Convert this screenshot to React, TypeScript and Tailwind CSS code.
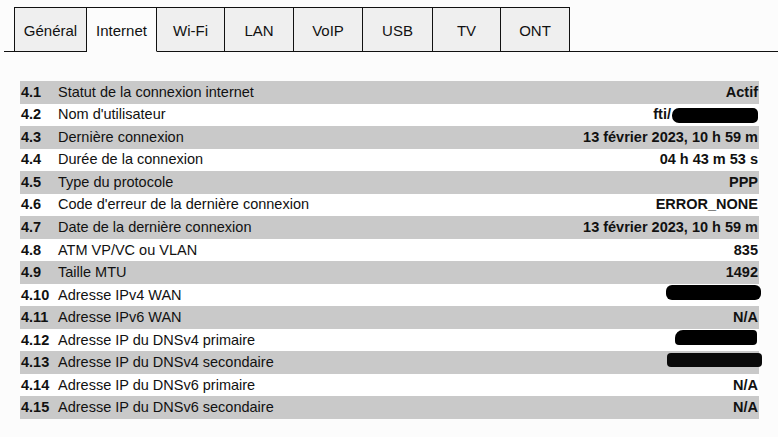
const tabs = [
  { label: 'Général', w: 'w-[73px] border-l' },
  { label: 'Internet', w: 'w-[70px]', active: true },
  { label: 'Wi-Fi', w: 'w-[68px]' },
  { label: 'LAN', w: 'w-[69px]' },
  { label: 'VoIP', w: 'w-[69px]' },
  { label: 'USB', w: 'w-[70px]' },
  { label: 'TV', w: 'w-[68px]' },
  { label: 'ONT', w: 'w-[69px]' },
]

type Row = { n: string; label: string; value?: string; mask?: 'user' | 'ip4' | 'dns1' | 'dns2' }

const rows: Row[] = [
  { n: '4.1', label: 'Statut de la connexion internet', value: 'Actif' },
  { n: '4.2', label: "Nom d'utilisateur", mask: 'user' },
  { n: '4.3', label: 'Dernière connexion', value: '13 février 2023, 10 h 59 m' },
  { n: '4.4', label: 'Durée de la connexion', value: '04 h 43 m 53 s' },
  { n: '4.5', label: 'Type du protocole', value: 'PPP' },
  { n: '4.6', label: "Code d'erreur de la dernière connexion", value: 'ERROR_NONE' },
  { n: '4.7', label: 'Date de la dernière connexion', value: '13 février 2023, 10 h 59 m' },
  { n: '4.8', label: 'ATM VP/VC ou VLAN', value: '835' },
  { n: '4.9', label: 'Taille MTU', value: '1492' },
  { n: '4.10', label: 'Adresse IPv4 WAN', mask: 'ip4' },
  { n: '4.11', label: 'Adresse IPv6 WAN', value: 'N/A' },
  { n: '4.12', label: 'Adresse IP du DNSv4 primaire', mask: 'dns1' },
  { n: '4.13', label: 'Adresse IP du DNSv4 secondaire', mask: 'dns2' },
  { n: '4.14', label: 'Adresse IP du DNSv6 primaire', value: 'N/A' },
  { n: '4.15', label: 'Adresse IP du DNSv6 secondaire', value: 'N/A' },
]

function Mask({ kind }: { kind: Row['mask'] }) {
  if (kind === 'user')
    return (
      <span className="flex items-center">
        <span>fti/</span>
        <span className="ml-[1px] inline-block h-[15px] w-[86px] rounded-[5px] rounded-l-[7px] bg-black" />
      </span>
    )
  if (kind === 'ip4')
    return <span className="mr-[-3px] inline-block h-[15px] w-[95px] rounded-[6px] bg-black" />
  if (kind === 'dns1')
    return <span className="mr-[1px] mt-[-3px] inline-block h-[15px] w-[82px] rounded-[4px] rounded-tl-[8px] bg-black" />
  return <span className="mr-[-4px] inline-block h-[14px] w-[95px] rounded-[4px] bg-[#0a0a0a]" />
}

export default function App() {
  return (
    <div className="min-h-[437px] bg-[#fcfcfc] pt-[7px] text-[14.5px] text-[#111]" style={{ fontFamily: '"Liberation Sans", Arial, sans-serif' }}>
      <div className="flex">
        <div className="ml-[4px] h-[45px] w-[10px] border-b border-[#111]" />
        {tabs.map(t => (
          <div
            key={t.label}
            className={`${t.w} flex h-[45px] items-center justify-center border-r border-t border-[#111] pt-[3px] text-[15px] ${
              t.active ? 'border-b border-b-transparent bg-[#fcfcfc]' : 'border-b bg-[#efefef]'
            }`}
          >
            {t.label}
          </div>
        ))}
        <div className="h-[45px] flex-1 border-b border-[#111]" />
      </div>

      <div className="ml-[20px] mt-[29px] w-[739px]">
        {rows.map((r, i) => (
          <div key={r.n} className={`flex h-[22.53px] items-center pt-[1px] ${i % 2 === 0 ? 'bg-[#c9c9c9]' : 'bg-white'}`}>
            <span className="w-[38px] pl-[1px] font-bold">{r.n}</span>
            <span className="flex-1">{r.label}</span>
            <span className="pr-[1px] font-bold">{r.mask ? <Mask kind={r.mask} /> : r.value}</span>
          </div>
        ))}
      </div>
    </div>
  )
}
